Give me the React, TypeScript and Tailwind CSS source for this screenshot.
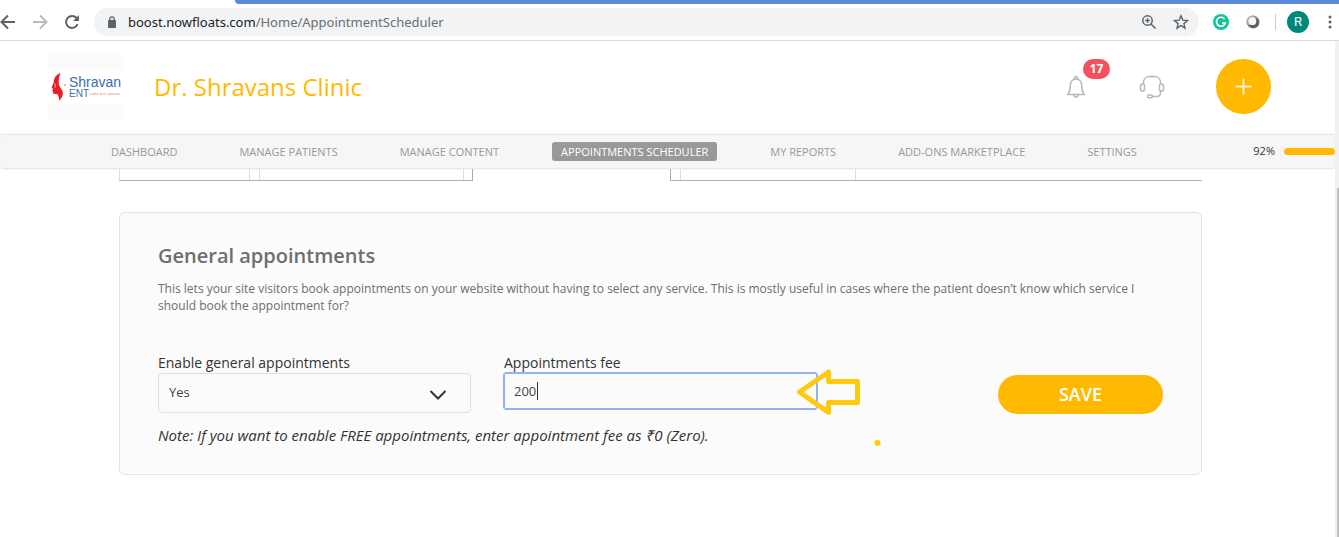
import React, { useState } from "react";

const navItems = [
  "DASHBOARD",
  "MANAGE PATIENTS",
  "MANAGE CONTENT",
  "APPOINTMENTS SCHEDULER",
  "MY REPORTS",
  "ADD-ONS MARKETPLACE",
  "SETTINGS",
];

function BrowserBar() {
  return (
    <div className="shrink-0 border-b border-[#dadce0] bg-white">
      <div className="pl-[235px]">
        <div className="h-1 rounded-bl-lg bg-[#5d89d8]" />
      </div>
      <div className="flex h-9 items-center">
        <button aria-label="Back" className="w-4 shrink-0 text-[#5f6368]">
          <svg width="16" height="16" viewBox="0 0 16 16" fill="none" stroke="currentColor" strokeWidth="2">
            <path d="M15 8H2M8 1.500L1.500 8L8 14.500" />
          </svg>
        </button>
        <button aria-label="Forward" className="ml-4 w-4 shrink-0 text-[#b9bbbe]">
          <svg width="16" height="16" viewBox="0 0 16 16" fill="none" stroke="currentColor" strokeWidth="2">
            <path d="M1 8H14M8 1.500L14.500 8L8 14.500" />
          </svg>
        </button>
        <button aria-label="Reload" className="ml-4 w-4 shrink-0 text-[#5f6368]">
          <svg width="16" height="16" viewBox="0 0 16 16" fill="none">
            <path d="M13.600 10.200A6 6 0 1 1 12.600 4" stroke="currentColor" strokeWidth="2" />
            <path d="M15 1v6H9z" fill="currentColor" />
          </svg>
        </button>
        <div className="ml-[14px] flex h-7 min-w-0 flex-1 items-center rounded-full bg-[#f1f3f4] pr-[10px] pl-[14px]">
          <svg width="8" height="12" viewBox="0 0 8 12" fill="none" className="shrink-0">
            <rect y="4" width="8" height="8" rx="1" fill="#5f6368" />
            <path d="M1.800 5V3a2.200 2.200 0 0 1 4.400 0v2" stroke="#5f6368" strokeWidth="1.300" />
          </svg>
          <span className="ml-3 truncate font-['Noto_Sans',sans-serif] text-[13px] leading-5 text-[#6b6f74]">
            <span className="text-[#202124]">boost.nowfloats.com</span>/Home/AppointmentScheduler
          </span>
          <button aria-label="Zoom" className="ml-auto text-[#5f6368]">
            <svg width="16" height="16" viewBox="0 0 16 16" fill="none" stroke="currentColor" strokeWidth="1.500">
              <circle cx="6.500" cy="6.500" r="4.700" />
              <path d="M10 10L14.500 14.500M4.200 6.500h4.600M6.500 4.200v4.600" />
            </svg>
          </button>
          <button aria-label="Bookmark" className="ml-4 text-[#5f6368]">
            <svg width="16" height="16" viewBox="0 0 16 16" fill="none" stroke="currentColor" strokeWidth="1.400">
              <path d="M8 1.800l1.800 4.300 4.700.4-3.600 3.100 1.100 4.600L8 11.700l-4 2.500 1.100-4.600L1.500 6.500l4.700-.4z" />
            </svg>
          </button>
        </div>
        <button aria-label="Grammar extension" className="ml-[14px] shrink-0">
          <svg width="16" height="16" viewBox="0 0 16 16" fill="none">
            <circle cx="8" cy="8" r="8" fill="#15c39a" />
            <path d="M11.500 5A4.500 4.500 0 1 0 12.300 9H9" stroke="#fff" strokeWidth="1.600" />
          </svg>
        </button>
        <button aria-label="Extension" className="ml-4 shrink-0">
          <svg width="16" height="16" viewBox="0 0 16 16">
            <circle cx="8" cy="8" r="6.500" fill="#7d7d7d" />
            <circle cx="7" cy="7" r="5.200" fill="#b0b0b0" />
            <circle cx="9" cy="9" r="5" fill="#5e5e5e" />
            <circle cx="7.400" cy="7.200" r="3.900" fill="#f4f4f4" />
          </svg>
        </button>
        <span className="ml-[14px] h-4 w-px shrink-0 bg-[#c8cacd]" />
        <button className="ml-[11px] h-[22px] w-[22px] shrink-0 rounded-full bg-[#00897b] font-['Roboto',sans-serif] text-[13px] text-white">
          R
        </button>
        <button aria-label="Browser menu" className="mr-[7px] ml-[19px] shrink-0">
          <svg width="4" height="14" viewBox="0 0 4 14" fill="#5f6368">
            <circle cx="2" cy="2" r="1.500" />
            <circle cx="2" cy="7" r="1.500" />
            <circle cx="2" cy="12" r="1.500" />
          </svg>
        </button>
      </div>
    </div>
  );
}

function ClinicLogo() {
  return (
    <div className="h-[66px] w-[76px] shrink-0 rounded-sm bg-[#fbfbfb] py-4">
      <div className="flex h-[34px] bg-white pl-1">
        <svg width="16" height="34" viewBox="0 0 16 34" className="shrink-0">
          <path
            d="M9.800 3C6 4 3 7 2.800 12L0.600 17.500l1.200.8-.2 2.200.8 3.200 4.200.6 1 2.200.6 4C11 28 12.200 25 11.800 22c-.4-2.400-2.800-4-3.600-6.500C7.200 12 8 6 9.800 3z"
            fill="#ed1c24"
          />
          <path d="M3.500 13.500c1.200 1 1.200 2.500.4 4" stroke="#fff" strokeWidth="0.800" fill="none" />
          <circle cx="14" cy="15" r="0.800" fill="#ed5b60" />
        </svg>
        <div className="pt-[5px] pl-[2px] font-['Liberation_Sans',sans-serif] text-[#3c6eab]">
          <div className="text-[14px] leading-[14px]">Shravan</div>
          <div className="flex items-center gap-px text-[10px] leading-[9px]">
            <span>ENT</span>
            <span className="font-['Liberation_Serif',serif] text-[5px] whitespace-nowrap text-[#df7a70] italic">
              care for senses
            </span>
          </div>
        </div>
      </div>
    </div>
  );
}

function Header() {
  return (
    <header className="flex h-[93px] shrink-0 items-center pr-16 pb-[2px] pl-[47px]">
      <ClinicLogo />
      <h1 className="ml-[31px] text-2xl whitespace-nowrap text-[#ffb900]">Dr. Shravans Clinic</h1>
      <button aria-label="Notifications, 17 new" className="relative ml-auto">
        <svg width="20" height="24" viewBox="0 0 20 24" fill="none" stroke="#b9b9b9" strokeWidth="1.500">
          <path d="M1.500 19.500C4 17 4 15.500 4.200 11C4.400 6.500 6 4 10 4s5.600 2.500 5.800 7c.2 4.500.2 6 2.700 8.500z" strokeLinejoin="round" />
          <path d="M8.500 4V3a1.500 1.500 0 0 1 3 0v1M8 19.500a2 2.500 0 0 0 4 0" />
        </svg>
        <span className="absolute -top-4 left-[17px] flex h-5 w-[27px] items-center justify-center rounded-full bg-[#f5515c] text-xs font-bold text-white">
          17
        </span>
      </button>
      <button aria-label="Support" className="ml-[53px]">
        <svg width="26" height="24" viewBox="0 0 26 24" fill="none" stroke="#b9b9b9" strokeWidth="1.500">
          <path d="M4.500 9V7.500C4.500 4 7 1.500 10.500 1.500h5C19 1.500 21.500 4 21.500 7.500V9M21.500 16v2c0 2.500-1.500 3.500-4 3.500h-4" />
          <rect x="1.500" y="9" width="4" height="7" rx="1.800" />
          <rect x="20.500" y="9" width="4" height="7" rx="1.800" />
          <rect x="8.500" y="20" width="5" height="2.800" rx="1.400" />
        </svg>
      </button>
      <button aria-label="Add" className="ml-[51px] flex h-[55px] w-[55px] items-center justify-center rounded-full bg-[#ffb900]">
        <svg width="17" height="17" viewBox="0 0 17 17" stroke="#fff4d6" strokeWidth="1.800">
          <path d="M0.500 8.500h16M8.500 0.500v16" />
        </svg>
      </button>
    </header>
  );
}

function Navigation() {
  return (
    <nav className="flex h-[35px] shrink-0 items-center rounded-sm border-y border-[#e6e6e6] bg-[#f6f6f6] pl-[102px] shadow-[0_0_2px_#e6e6e6]">
      <div className="flex gap-11">
        {navItems.map((item) => (
          <a
            key={item}
            href="#"
            className={
              item === "APPOINTMENTS SCHEDULER"
                ? "rounded-[3px] bg-[#999999] px-[9px] text-[11px] leading-[19px] font-medium whitespace-nowrap text-white"
                : "px-[9px] text-[11px] leading-[19px] whitespace-nowrap text-[#999999]"
            }
          >
            {item}
          </a>
        ))}
      </div>
      <span className="ml-auto text-[11px] text-[#333333]">92%</span>
      <span className="ml-[9px] h-[7px] w-[51px] shrink-0 rounded-full bg-[#ffb900]" />
    </nav>
  );
}

function ScheduleTables() {
  return (
    <div className="flex h-3 justify-between">
      <div className="flex w-[354px] border-r border-b border-l border-r-[#a9a9a9] border-b-[#b3b3b3] border-l-[#dddddd]">
        <div className="w-[130px] border-r border-[#dddddd]" />
        <div className="ml-[9px] w-[205px] border-x border-[#dddddd]" />
      </div>
      <div className="flex w-[532px] border-b border-l border-b-[#b3b3b3] border-l-[#a9a9a9]">
        <div className="ml-[9px] w-[176px] border-x border-[#dddddd]" />
      </div>
    </div>
  );
}

function GeneralAppointments() {
  const [enabled, setEnabled] = useState("Yes");
  const [fee, setFee] = useState("200");
  return (
    <section className="mt-[31px] rounded-md border border-[#e3e3e3] bg-[#fbfbfb] px-[38px] pt-7 pb-[29px]">
      <h2 className="text-xl leading-[30px] font-semibold text-[#6e6e6e]">General appointments</h2>
      <p className="mt-[9px] text-xs leading-[17px] text-[#6e6e6e]">
        This lets your site visitors book appointments on your website without having to select any service. This is
        mostly useful in cases where the patient doesn’t know which service I should book the appointment for?
      </p>
      <form className="mt-[39px]" onSubmit={(e) => e.preventDefault()}>
        <div className="flex items-start gap-[33px]">
          <div className="w-[313px]">
            <label htmlFor="enable" className="block text-sm leading-5 text-[#333333]">
              Enable general appointments
            </label>
            <div className="relative">
              <select
                id="enable"
                value={enabled}
                onChange={(e) => setEnabled(e.target.value)}
                className="block h-10 w-full appearance-none rounded border border-[#e0e0e0] bg-[#fbfbfb] px-[10px] text-[13px] text-[#444444]"
              >
                <option>Yes</option>
                <option>No</option>
              </select>
              <svg
                width="18"
                height="12"
                viewBox="0 0 18 12"
                fill="none"
                stroke="#333"
                strokeWidth="2"
                className="pointer-events-none absolute top-4 right-6"
              >
                <path d="M1.500 2L9 9.500L16.500 2" />
              </svg>
            </div>
          </div>
          <div className="w-[313px]">
            <label htmlFor="fee" className="block text-sm leading-5 text-[#333333]">
              Appointments fee
            </label>
            <div className="relative">
              <input
                id="fee"
                value={fee}
                onChange={(e) => setFee(e.target.value)}
                className="block h-9 w-full rounded-xs border border-[#8fb3f5] bg-[#fbfbfb] px-[9px] text-[13px] text-[#444444] caret-transparent outline outline-[#8fb3f5]"
              />
              <span className="absolute top-[9px] left-[33px] h-[18px] w-px bg-[#333333]" />
              <svg
                width="90"
                height="80"
                viewBox="0 0 90 80"
                fill="none"
                className="pointer-events-none absolute -top-1 left-[292px]"
              >
                <path
                  d="M3.500 23L32.500 3V12.500H61.500V33.500H32.500V43.500Z"
                  stroke="#ffc90e"
                  strokeWidth="5"
                  strokeLinejoin="round"
                />
                <circle cx="81.500" cy="74" r="3" fill="#ffc90e" />
              </svg>
            </div>
          </div>
          <button
            type="submit"
            className="mt-[22px] ml-auto h-[39px] w-[165px] rounded-full bg-[#ffb900] pb-px text-lg font-semibold text-white"
          >
            SAVE
          </button>
        </div>
        <p className="mt-[11px] text-[15px] leading-5 text-[#333333] italic">
          Note: If you want to enable FREE appointments, enter appointment fee as ₹0 (Zero).
        </p>
      </form>
    </section>
  );
}

export default function App() {
  return (
    <div className="flex min-h-screen flex-col bg-white font-['Open_Sans',sans-serif]">
      <BrowserBar />
      <div className="flex flex-1">
        <div className="flex min-w-0 flex-1 flex-col">
          <Header />
          <Navigation />
          <main className="pr-[133px] pl-[119px]">
            <ScheduleTables />
            <GeneralAppointments />
          </main>
        </div>
        <div className="flex w-1 shrink-0 flex-col bg-[#f1f1f1] pt-[147px] pl-[2px]">
          <div className="flex-1 bg-[#c1c1c1]" />
        </div>
      </div>
    </div>
  );
}
